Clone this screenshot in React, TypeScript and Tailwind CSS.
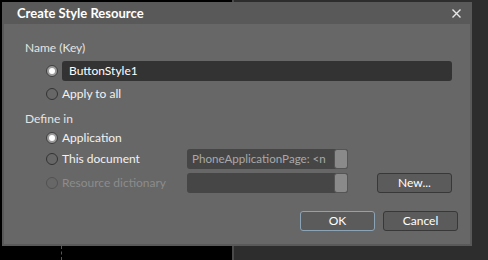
import React from "react";

const font = { fontFamily: 'Lato, "Noto Sans", sans-serif' };

function Radio({ checked = false, disabled = false }: { checked?: boolean; disabled?: boolean }) {
  if (checked) {
    return (
      <div className="w-[12px] h-[12px] rounded-full border border-[#3e3e3e] bg-[#9a9a9a] flex items-center justify-center shrink-0">
        <div className="w-[6px] h-[6px] rounded-full bg-white" />
      </div>
    );
  }
  return (
    <div
      className={
        "w-[12px] h-[12px] rounded-full border shrink-0 " +
        (disabled ? "border-[#525252]" : "border-[#333333]")
      }
    />
  );
}

function Combo({ text }: { text?: string }) {
  return (
    <div className="w-[161px] h-[20px] rounded-[3px] bg-[#464646] flex items-center">
      <div className="flex-1 pl-[5px] text-[11.6px] text-[#a9a9a9] whitespace-nowrap leading-none">
        {text}
      </div>
      <div className="w-[14px] h-[20px] rounded-[3px] bg-[#8a8a8a] border border-[#555555] shrink-0" />
    </div>
  );
}

export default function App() {
  return (
    <div className="relative w-[488px] h-[260px] overflow-hidden flex bg-[#2d2d2d]" style={font}>
      <div className="w-[232px] h-full bg-black relative">
        <div className="absolute left-[61px] top-[246px] h-[14px] border-l border-dashed border-[#3a5a8a]" />
      </div>
      <div className="w-[2px] h-full bg-[#4a4a4a]" />
      <div className="flex-1 h-full bg-[#2d2d2d]" />

      {/* dialog window */}
      <div className="absolute left-[2px] top-[2px] w-[470px] h-[244px] bg-[#595959] flex flex-col">
        <div className="h-[22px] flex items-center justify-between pl-[15px] pr-[11px] shrink-0">
          <span className="text-[13px] font-bold text-white leading-none">Create Style Resource</span>
          <svg width="9" height="9" viewBox="0 0 9 9" className="mt-[1px]">
            <path d="M0.5 0.5 L8.5 8.5 M8.5 0.5 L0.5 8.5" stroke="#e6e6e6" strokeWidth="1.4" />
          </svg>
        </div>
        <div className="flex-1 mx-[2px] mb-[2px] bg-[#676767] flex flex-col pl-[21px] pr-[12px] pt-[16px] text-[12px] text-[#f2f2f2]">
          <div className="h-[16px] flex items-center text-[#e4e4e4]">Name (Key)</div>
          <div className="mt-[5px] h-[20px] flex items-center pl-[21px] gap-[4px]">
            <Radio checked />
            <div className="w-[390px] h-[20px] rounded-[3px] bg-[#333333] flex items-center pl-[7px] text-white">
              ButtonStyle1
            </div>
          </div>
          <div className="mt-[5px] h-[16px] flex items-center pl-[21px] gap-[4px]">
            <Radio />
            <span>Apply to all</span>
          </div>
          <div className="mt-[9px] h-[16px] flex items-center text-[#e4e4e4]">Define in</div>
          <div className="mt-[3px] h-[16px] flex items-center pl-[21px] gap-[4px]">
            <Radio checked />
            <span>Application</span>
          </div>
          <div className="mt-[3px] h-[20px] flex items-center pl-[21px] gap-[4px]">
            <Radio />
            <span className="w-[121px]">This document</span>
            <Combo text="PhoneApplicationPage: <n" />
          </div>
          <div className="mt-[4px] h-[20px] flex items-center pl-[21px] gap-[4px]">
            <Radio disabled />
            <span className="w-[121px] text-[#8c8c8c]">Resource dictionary</span>
            <Combo />
            <button className="ml-[25px] w-[75px] h-[20px] rounded-[3px] bg-[#5b5b5b] border border-[#383838] text-white text-[12px] leading-none">
              New...
            </button>
          </div>
          <div className="mt-[18px] h-[20px] flex justify-end gap-[8px]">
            <button className="w-[75px] h-[20px] rounded-[3px] bg-[#5b5b5b] border border-[#8ba3b5] text-white text-[12px] leading-none">
              OK
            </button>
            <button className="w-[75px] h-[20px] rounded-[3px] bg-[#5b5b5b] border border-[#383838] text-white text-[12px] leading-none">
              Cancel
            </button>
          </div>
        </div>
      </div>
    </div>
  );
}
